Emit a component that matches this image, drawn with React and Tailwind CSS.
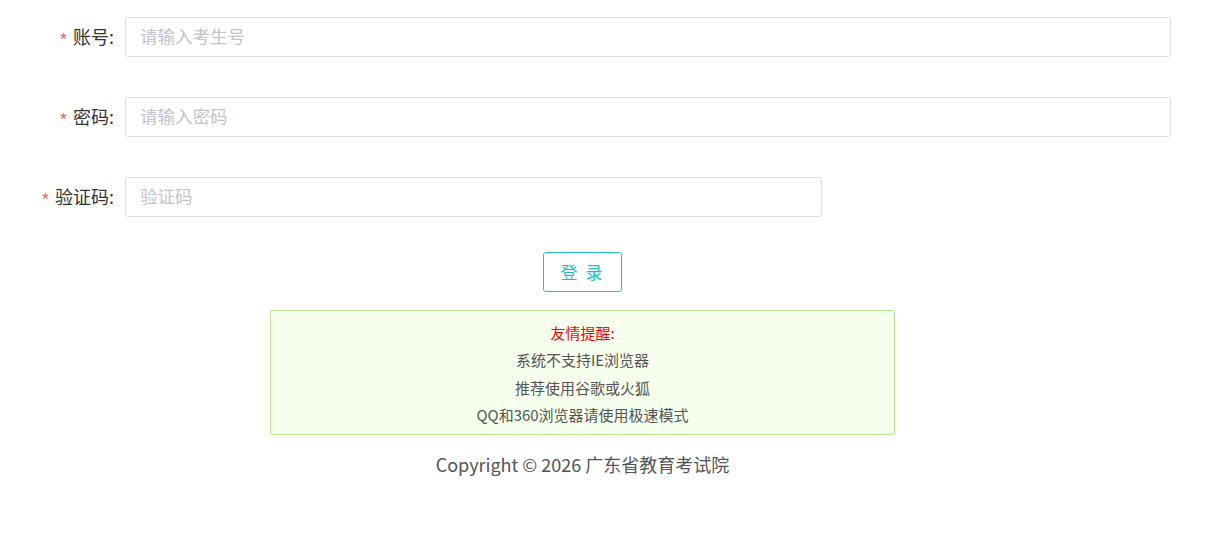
const fields = [
  { label: "账号", placeholder: "请输入考生号", wide: true },
  { label: "密码", placeholder: "请输入密码", wide: true },
  { label: "验证码", placeholder: "验证码", wide: false },
];

const FormRow = ({ label, placeholder, wide }) => (
  <div className="flex items-center">
    <label className="flex w-[125px] items-center justify-end pb-[2px] pr-[11px] text-[18px] text-[#333]">
      <span className="relative top-[3px] mr-[5px] text-[19px] leading-none text-[#f56c6c]">*</span>
      {label}:
    </label>
    <input
      type="text"
      placeholder={placeholder}
      className={`h-[40px] rounded-[3px] border border-[#dcdfe6] px-[14px] pb-[3px] text-[17.5px] text-[#333] outline-none placeholder:text-[#c0c4cc] ${
        wide ? "w-[1046px]" : "w-[697px]"
      }`}
    />
  </div>
);

export default function App() {
  return (
    <div
      className="min-h-[541px] bg-white pt-[17px]"
      style={{ fontFamily: '"Noto Sans CJK SC", "Noto Sans", sans-serif' }}
    >
      <div className="flex w-[1171px] flex-col gap-[40px]">
        {fields.map((f) => (
          <FormRow key={f.label} {...f} />
        ))}
      </div>

      <div className="flex w-[1165px] flex-col items-center">
        <button className="mt-[35px] h-[40px] w-[79px] rounded-[3px] border border-[#1ec0c6] bg-white pb-[1px] text-[17px] tracking-[2px] text-[#1ec0c6]">
          登 录
        </button>

        <div className="mt-[18px] flex h-[125px] w-[625px] flex-col items-center justify-center rounded-[2px] border border-[#b7eb8f] bg-[#f6ffed] pt-[2px] text-[15px] leading-[27.5px] text-[#555]">
          <p className="text-[#ff0000]">友情提醒:</p>
          <p>系统不支持IE浏览器</p>
          <p>推荐使用谷歌或火狐</p>
          <p>QQ和360浏览器请使用极速模式</p>
        </div>

        <p className="mt-[16px] text-[18px] text-[#555]">Copyright © 2026 广东省教育考试院</p>
      </div>
    </div>
  );
}
